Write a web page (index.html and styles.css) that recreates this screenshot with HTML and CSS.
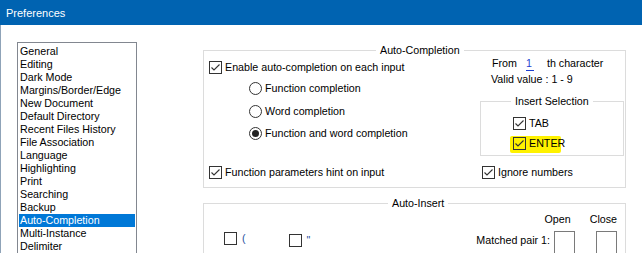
FILE: index.html
```html
<!DOCTYPE html>
<html>
<head>
<meta charset="utf-8">
<title>Preferences</title>
<link rel="stylesheet" href="styles.css">
</head>
<body>
<div class="window">
  <div class="titlebar">Preferences</div>
  <div class="content">
    <ul class="listbox">
      <li>General</li>
      <li>Editing</li>
      <li>Dark Mode</li>
      <li>Margins/Border/Edge</li>
      <li>New Document</li>
      <li>Default Directory</li>
      <li>Recent Files History</li>
      <li>File Association</li>
      <li>Language</li>
      <li>Highlighting</li>
      <li>Print</li>
      <li>Searching</li>
      <li>Backup</li>
      <li class="sel">Auto-Completion</li>
      <li>Multi-Instance</li>
      <li>Delimiter</li>
    </ul>
    <div class="panel">
      <fieldset class="group ac">
        <legend>Auto-Completion</legend>
        <div class="ac-grid">
          <div class="ac-left">
            <label class="check enable"><span class="cb"><svg width="11" height="11" viewBox="0 0 11 11"><path d="M1.5 5.5 L4 8 L9.5 2.5" fill="none" stroke="#333" stroke-width="1.1"/></svg></span>Enable auto-completion on each input</label>
            <div class="radios">
              <label class="radio"><span class="rb"></span>Function completion</label>
              <label class="radio"><span class="rb"></span>Word completion</label>
              <label class="radio"><span class="rb on"></span>Function and word completion</label>
            </div>
          </div>
          <div class="ac-right">
            <div class="from">From<span class="num">1</span>th character</div>
            <div class="valid">Valid value : 1 - 9</div>
            <fieldset class="group ins">
              <legend>Insert Selection</legend>
              <label class="check tab"><span class="cb"><svg width="11" height="11" viewBox="0 0 11 11"><path d="M1.5 5.5 L4 8 L9.5 2.5" fill="none" stroke="#333" stroke-width="1.1"/></svg></span>TAB</label>
              <label class="check enter"><span class="cb"><svg width="11" height="11" viewBox="0 0 11 11"><path d="M1.5 5.5 L4 8 L9.5 2.5" fill="none" stroke="#333" stroke-width="1.1"/></svg></span>ENTER</label>
            </fieldset>
          </div>
          <label class="check hint"><span class="cb"><svg width="11" height="11" viewBox="0 0 11 11"><path d="M1.5 5.5 L4 8 L9.5 2.5" fill="none" stroke="#333" stroke-width="1.1"/></svg></span>Function parameters hint on input</label>
          <label class="check ign"><span class="cb"><svg width="11" height="11" viewBox="0 0 11 11"><path d="M1.5 5.5 L4 8 L9.5 2.5" fill="none" stroke="#333" stroke-width="1.1"/></svg></span>Ignore numbers</label>
        </div>
      </fieldset>
      <fieldset class="group ai">
        <legend>Auto-Insert</legend>
        <div class="ai-body">
          <label class="check pair p1"><span class="cb"></span><span class="sym">(</span></label>
          <label class="check pair p2"><span class="cb"></span><span class="sym">"</span></label>
          <div class="pairs">
            <div class="pairs-head"><span>Open</span><span class="close">Close</span></div>
            <div class="pairs-row"><span class="plabel">Matched pair 1:</span><span class="box"></span><span class="box b2"></span></div>
          </div>
        </div>
      </fieldset>
    </div>
  </div>
</div>
</body>
</html>
```
FILE: styles.css
```css
* { box-sizing: border-box; }
html, body { margin: 0; padding: 0; background: #fff; overflow: hidden; }
body {
  width: 642px; height: 253px;
  font-family: "Liberation Sans", Arial, sans-serif;
  font-size: 10.7px; color: #000;
}
.window { width: 642px; height: 253px; }
.titlebar {
  height: 25px; background: #0063b1; color: #fff;
  font-size: 11px; line-height: 26px; padding-left: 6px;
}
.content {
  display: flex; align-items: flex-start;
  padding: 17px 0 0 16px;
  border-left: 1px solid #8fa3b8;
  height: 228px;
}
.listbox {
  list-style: none; margin: 0; padding: 2px 1px 1px 1px;
  width: 120px; height: 240px; flex: none;
  border: 1px solid #828790;
}
.listbox li { height: 13px; line-height: 13px; padding-left: 1px; white-space: nowrap; }
.listbox li.sel { background: #0078d7; color: #fff; }
.panel { margin-left: 66px; width: 423px; flex: none; }
.group {
  margin: 0; padding: 0; min-width: 0;
  border: 1px solid #dcdcdc;
}
.group > legend { padding: 0 4px; line-height: 13px; height: 13px; }
.ac { margin-top: 2px; }
.ac > legend { margin-left: 172px; }
.ac-grid {
  display: grid; grid-template-columns: 1fr 144px;
  padding: 0 1px 8px 5px;
}
.check { display: flex; align-items: center; height: 13px; line-height: 13px; white-space: nowrap; }
.cb {
  width: 13px; height: 13px; flex: none; margin-right: 3px;
  border: 1px solid #333; display: flex; align-items: center; justify-content: center;
}
.cb svg { display: block; }
.enable { margin-top: 4px; }
.radios { margin-left: 40px; margin-top: 8px; display: flex; flex-direction: column; gap: 9.5px; }
.radio { display: flex; align-items: center; height: 13px; line-height: 13px; white-space: nowrap; }
.rb {
  width: 13px; height: 13px; flex: none; margin-right: 3px;
  border: 1px solid #333; border-radius: 50%;
  display: flex; align-items: center; justify-content: center;
}
.rb.on::after { content: ""; width: 7px; height: 7px; border-radius: 50%; background: #222; }
.from { height: 13px; line-height: 13px; padding-left: 12px; white-space: nowrap; }
.num {
  display: inline-block; width: 8px; margin: 0 13px 0 9px;
  color: #1d3fd0; border-bottom: 1px solid #1d3fd0; line-height: 12px; height: 14px; text-align: left;
}
.valid { height: 13px; line-height: 13px; margin-top: 3px; padding-left: 11px; }
.ins { margin-top: 9px; padding: 0 0 2px 0; }
.ins > legend { margin-left: 30px; }
.tab { margin-top: 9px; margin-left: 32px; }
.enter {
  margin-top: 6px; margin-left: 29px;
  height: 17px; width: 51px;
  padding: 1px 3px 3px 3px; align-items: flex-start;
  background: #fff200; border-radius: 2px;
}
.hint { margin-top: 10px; }
.ign { margin-top: 10px; margin-left: 2px; }
.ai { margin-top: 9px; height: 80px; }
.ai > legend { margin-left: 184px; }
.ai-body { display: flex; align-items: flex-start; padding: 0 8px 0 20px; }
.pair .cb { margin-right: 5px; }
.sym { color: #1f4fa0; }
.p1 { margin-top: 22px; }
.p2 { margin-top: 24px; margin-left: 43px; }
.pairs { margin-left: auto; display: flex; flex-direction: column; align-items: flex-end; }
.pairs-head { display: flex; height: 13px; line-height: 13px; margin-top: 3px; }
.pairs-head .close { margin-left: 19px; }
.pairs-row { display: flex; align-items: flex-start; margin-top: 5px; }
.plabel { line-height: 13px; margin-top: 3px; white-space: nowrap; }
.box { width: 21px; height: 30px; border: 1px solid #7a7a7a; margin-left: 4px; }
.box.b2 { margin-left: 21px; }
```
